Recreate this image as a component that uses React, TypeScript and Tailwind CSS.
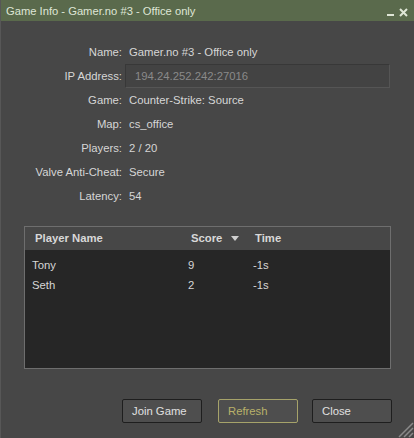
import React from "react";

interface InfoRow {
  label: string;
  value: string;
  field?: boolean;
}

const INFO: InfoRow[] = [
  { label: "Name:", value: "Gamer.no #3 - Office only" },
  { label: "IP Address:", value: "194.24.252.242:27016", field: true },
  { label: "Game:", value: "Counter-Strike: Source" },
  { label: "Map:", value: "cs_office" },
  { label: "Players:", value: "2 / 20" },
  { label: "Valve Anti-Cheat:", value: "Secure" },
  { label: "Latency:", value: "54" },
];

const PLAYERS = [
  { name: "Tony", score: "9", time: "-1s" },
  { name: "Seth", score: "2", time: "-1s" },
];

const font = { fontFamily: '"Liberation Sans", Arial, sans-serif' };

export default function App() {
  return (
    <div
      className="w-[414px] h-[438px] bg-[#474747] flex flex-col text-[11.3px] text-[#d6d6d6] relative overflow-hidden border-l border-[#575757]"
      style={font}
    >
      {/* title bar */}
      <div className="h-[21px] shrink-0 bg-[#5a6a4c] flex items-center pl-[5px] pr-[6px] text-[#dfe6d6] text-[11.2px]">
        <span className="flex-1 pt-[1px]">Game Info - Gamer.no #3 - Office only</span>
        <div className="flex items-end gap-[5px] h-[12px]">
          <div className="w-[7px] h-[2px] bg-[#dfe6d6] mb-[1px]" />
          <svg width="9" height="9" viewBox="0 0 9 9">
            <path d="M1 1 L8 8 M8 1 L1 8" stroke="#dfe6d6" strokeWidth="2" />
          </svg>
        </div>
      </div>

      {/* info rows */}
      <div className="grid grid-cols-[121px_1fr] gap-x-[7px] pt-[19px] pr-[25px]">
        {INFO.map((row) => (
          <React.Fragment key={row.label}>
            <div className="h-[24px] flex items-center justify-end">{row.label}</div>
            <div className="h-[24px] flex items-center">
              {row.field ? (
                <div className="-ml-[4px] w-[265px] h-[24px] border border-[#383838] border-b-[#555] border-r-[#555] bg-[#434343] flex items-center pl-[9px] text-[#8a8a8a]">
                  {row.value}
                </div>
              ) : (
                row.value
              )}
            </div>
          </React.Fragment>
        ))}
      </div>

      {/* players table */}
      <div className="mx-[23px] mt-[18px] h-[143px] flex flex-col border border-[#6e6e6e]">
        <div className="h-[23px] shrink-0 bg-[#474747] flex items-center font-bold text-[#d8d8d8]">
          <div className="w-[166px] pl-[10px]">Player Name</div>
          <div className="w-[64px] flex items-center">
            Score
            <svg width="8" height="5" viewBox="0 0 8 5" className="ml-[9px]">
              <path d="M0 0 H8 L4 5 Z" fill="#cfcfcf" />
            </svg>
          </div>
          <div>Time</div>
        </div>
        <div className="flex-1 bg-[#262626] pt-[5px]">
          {PLAYERS.map((p) => (
            <div key={p.name} className="h-[20px] flex items-center">
              <div className="w-[163px] pl-[7px]">{p.name}</div>
              <div className="w-[65px]">{p.score}</div>
              <div>{p.time}</div>
            </div>
          ))}
        </div>
      </div>

      {/* buttons */}
      <div className="flex justify-end pr-[22px] mt-[30px]">
        <button className="w-[80px] h-[24px] rounded-[2px] border border-[#1e1e1e] bg-[#4e4e4e] text-left pl-[9px] text-[#e0e0e0] mr-[16px]">
          Join Game
        </button>
        <button className="w-[80px] h-[24px] rounded-[2px] border border-[#a6a36a] bg-[#4e4e4e] text-left pl-[9px] text-[#b9b16a] mr-[14px]">
          Refresh
        </button>
        <button className="w-[80px] h-[24px] rounded-[2px] border border-[#1e1e1e] bg-[#4e4e4e] text-left pl-[9px] text-[#e0e0e0]">
          Close
        </button>
      </div>

      {/* resize grip */}
      <svg width="20" height="20" viewBox="0 0 20 20" className="absolute right-0 bottom-0">
        <path d="M19 5 L5 19 M19 10 L10 19 M19 15 L15 19" stroke="#8a8a8a" strokeWidth="1.5" />
      </svg>
    </div>
  );
}
